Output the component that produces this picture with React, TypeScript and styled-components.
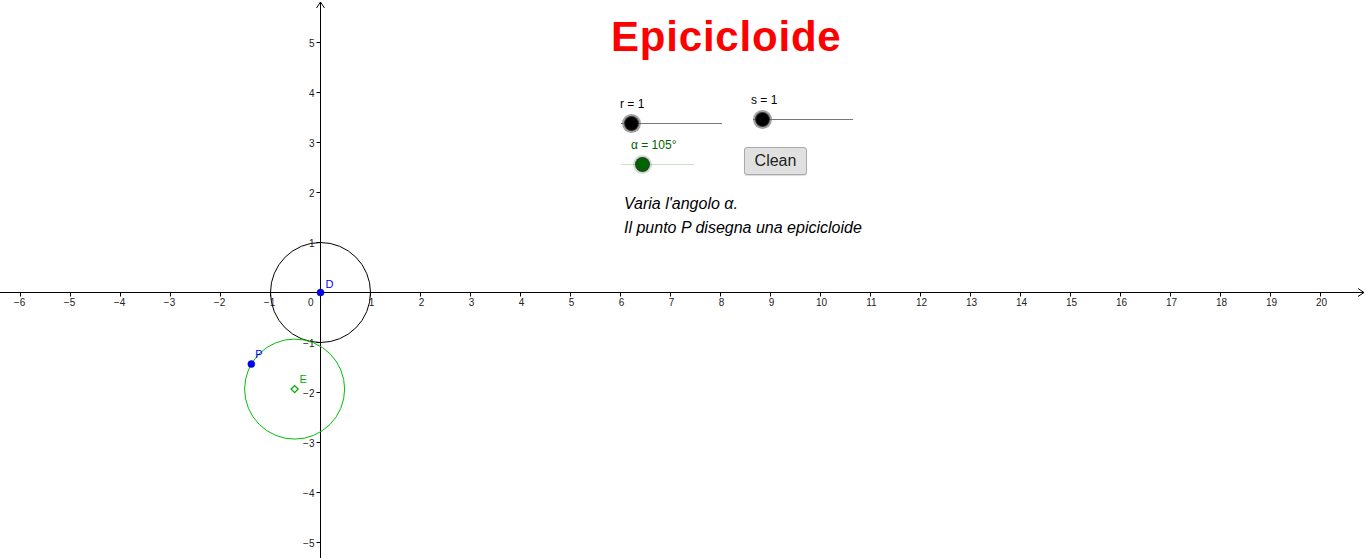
import * as React from 'react'
import styled, { createGlobalStyle } from 'styled-components'

const GlobalStyle = createGlobalStyle`
  html, body {
    margin: 0;
    padding: 0;
    background: #fff;
    font-family: "Liberation Sans", Arial, sans-serif;
  }
`

const Canvas = styled.div`
  position: relative;
  width: 1366px;
  height: 558px;
  overflow: hidden;
  background: #fff;
`

const Graph = styled.svg`
  display: block;
  font-family: "Liberation Sans", Arial, sans-serif;
`

// everything GeoGebra puts over the graphics view sits in one panel
const Panel = styled.div`
  position: absolute;
  left: 611px;
  top: 13px;
  display: flex;
  flex-direction: column;
  align-items: flex-start;
`

const Title = styled.h1`
  margin: 0 0 32px 0;
  font-size: 42px;
  line-height: 48px;
  letter-spacing: 0.8px;
  font-weight: bold;
  color: #ff0000;
  white-space: nowrap;
`

const Controls = styled.div`
  display: grid;
  grid-template-columns: 101px 110px;
  column-gap: 22px;
  row-gap: 6px;
  margin-left: 10px;
  align-items: start;
`

const SliderBox = styled.div<{ w: number, offset?: number, indent?: number }>`
  display: flex;
  flex-direction: column;
  width: ${p => p.w}px;
  margin-top: ${p => p.offset || 0}px;
  margin-left: ${p => p.indent || 0}px;
`

const SliderLabel = styled.span<{ color?: string, pad?: number }>`
  margin: 0 0 3px ${p => p.pad || 0}px;
  white-space: nowrap;
  font-size: 12px;
  line-height: 14px;
  color: ${p => p.color || '#000'};
`

const Bar = styled.div`
  position: relative;
  height: 18px;
`

const Track = styled.div<{ color: string }>`
  position: absolute;
  left: 0;
  right: 0;
  top: 9px;
  height: 1px;
  background: ${p => p.color};
`

const Knob = styled.div<{ fill: string, halo: string }>`
  position: absolute;
  top: 3px;
  width: 13px;
  height: 13px;
  margin-left: -6.5px;
  border-radius: 50%;
  background: ${p => p.fill};
  box-shadow: 0 0 0 1px #333, 0 0 0 3px ${p => p.halo};
`

const CleanButton = styled.button`
  width: 63px;
  height: 28px;
  margin-top: 9px;
  padding: 0;
  border: 1px solid #a9a9a9;
  border-radius: 3px;
  background: #e0e0e0;
  color: #222;
  font-family: "Liberation Sans", Arial, sans-serif;
  font-size: 16px;
  box-shadow: 0 1px 1px rgba(0,0,0,.15);
`

const Note = styled.p`
  margin: 17px 0 0 13px;
  font-style: italic;
  font-size: 16px;
  line-height: 24px;
  color: #000;
  white-space: nowrap;
`

interface SliderProps {
  label: string
  width: number
  knobAt: number
  green?: boolean
  offset?: number
  indent?: number
  labelPad?: number
}

function Slider (props: SliderProps) {
  const { green } = props
  return (
    <SliderBox w={props.width} offset={props.offset} indent={props.indent}>
      <SliderLabel color={green ? '#006400' : '#000'} pad={props.labelPad}>{props.label}</SliderLabel>
      <Bar>
        <Track color={green ? '#c8e0c8' : '#777'} />
        <Knob
          fill={green ? '#006400' : '#000'}
          halo={green ? 'rgba(0,100,0,.2)' : 'rgba(100,100,100,.6)'}
          style={{ left: props.knobAt }}
        />
      </Bar>
    </SliderBox>
  )
}

const OX = 320.5
const OY = 292.5
const U = 50

const px = (x: number) => OX + x * U
const py = (y: number) => OY - y * U

function Axes () {
  const xs: number[] = []
  for (let i = -6; i <= 20; i++) if (i !== 0) xs.push(i)
  const ys: number[] = []
  for (let i = -5; i <= 5; i++) if (i !== 0) ys.push(i)
  const label = (n: number) => (n < 0 ? '\u2212' + Math.abs(n) : String(n))

  return (
    <g>
      <line x1={0} y1={OY} x2={1364} y2={OY} stroke="#000" strokeWidth={1} />
      <polyline points={`1358,${OY - 4} 1364,${OY} 1358,${OY + 4}`} fill="none" stroke="#000" strokeWidth={1} />
      <line x1={OX} y1={2} x2={OX} y2={558} stroke="#000" strokeWidth={1} />
      <polyline points={`${OX - 4},8 ${OX},2 ${OX + 4},8`} fill="none" stroke="#000" strokeWidth={1} />
      {xs.map(i => (
        <g key={'x' + i}>
          <line x1={px(i)} y1={OY} x2={px(i)} y2={OY + 4} stroke="#000" />
          <text x={px(i) + (i < 0 ? -1 : 1)} y={OY + 13} fontSize={10} textAnchor="middle" fill="#222">{label(i)}</text>
        </g>
      ))}
      {ys.map(i => (
        <g key={'y' + i}>
          <line x1={OX - 4} y1={py(i)} x2={OX} y2={py(i)} stroke="#000" />
          <text x={OX - 6} y={py(i) + 4} fontSize={10} textAnchor="end" fill="#222">{label(i)}</text>
        </g>
      ))}
      <text x={OX - 7} y={OY + 13} fontSize={10} textAnchor="end" fill="#222">0</text>
    </g>
  )
}

export default function App () {
  const r = 1
  const s = 1
  const alpha = (105 * Math.PI) / 180
  const ex = (r + s) * Math.cos(alpha)
  const ey = -(r + s) * Math.sin(alpha)
  const pAng = (150 * Math.PI) / 180
  const pxv = ex + s * Math.cos(pAng)
  const pyv = ey + s * Math.sin(pAng)

  return (
    <Canvas>
      <GlobalStyle />
      <Graph width={1366} height={558} viewBox="0 0 1366 558">
        <Axes />
        <circle cx={OX} cy={OY} r={r * U} fill="none" stroke="#000" strokeWidth={1} />
        <circle cx={px(ex)} cy={py(ey)} r={s * U} fill="none" stroke="#00c000" strokeWidth={1} />
        <rect x={px(ex) - 2.5} y={py(ey) - 2.5} width={5} height={5} fill="#fff" stroke="#00b000" strokeWidth={1.3} transform={`rotate(45 ${px(ex)} ${py(ey)})`} />
        <text x={px(ex) + 5} y={py(ey) - 6} fontSize={11} fill="#00b000">E</text>
        <circle cx={OX} cy={OY} r={3.5} fill="#0000ff" stroke="#00008b" strokeWidth={0.5} />
        <text x={OX + 5} y={OY - 5} fontSize={11} fill="#0000ff">D</text>
        <circle cx={px(pxv)} cy={py(pyv)} r={3.5} fill="#0000ff" stroke="#00008b" strokeWidth={0.5} />
        <text x={px(pxv) + 4} y={py(pyv) - 6} fontSize={11} fill="#0000ff">P</text>
      </Graph>

      <Panel>
        <Title>Epicicloide</Title>
        <Controls>
          <Slider label="r = 1" width={101} knobAt={10} offset={4} labelPad={-1} />
          <Slider label="s = 1" width={100} knobAt={9} indent={9} labelPad={-2} />
          <Slider label="α = 105°" width={73} knobAt={21} green labelPad={10} />
          <CleanButton>Clean</CleanButton>
        </Controls>
        <Note>
          Varia l'angolo α.<br />
          Il punto P disegna una epicicloide
        </Note>
      </Panel>
    </Canvas>
  )
}
